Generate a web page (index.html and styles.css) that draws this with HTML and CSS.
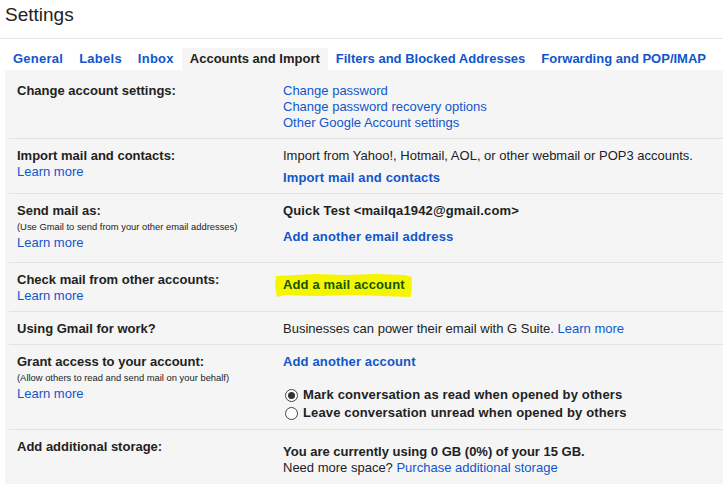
FILE: index.html
```html
<!DOCTYPE html>
<html lang="en">
<head>
<meta charset="utf-8">
<title>Settings</title>
<link rel="stylesheet" href="styles.css">
</head>
<body>
<header class="title">Settings</header>
<nav class="tabs">
  <a class="tab spaced">General</a>
  <a class="tab spaced">Labels</a>
  <a class="tab spaced">Inbox</a>
  <a class="tab active">Accounts and Import</a>
  <a class="tab">Filters and Blocked Addresses</a>
  <a class="tab">Forwarding and POP/IMAP</a>
</nav>
<main class="panel">
  <section class="row">
    <div class="label"><div class="bold">Change account settings:</div></div>
    <div class="value">
      <div><a class="link">Change password</a></div>
      <div><a class="link">Change password recovery options</a></div>
      <div><a class="link">Other Google Account settings</a></div>
    </div>
  </section>
  <section class="row">
    <div class="label">
      <div class="bold">Import mail and contacts:</div>
      <div><a class="link">Learn more</a></div>
    </div>
    <div class="value">
      <div>Import from Yahoo!, Hotmail, AOL, or other webmail or POP3 accounts.</div>
      <div class="gap6"><a class="link bold wide">Import mail and contacts</a></div>
    </div>
  </section>
  <section class="row">
    <div class="label">
      <div class="bold">Send mail as:</div>
      <div class="small">(Use Gmail to send from your other email addresses)</div>
      <div><a class="link">Learn more</a></div>
    </div>
    <div class="value pad-b">
      <div class="bold wide">Quick Test &lt;mailqa1942@gmail.com&gt;</div>
      <div class="gap10"><a class="link bold wide">Add another email address</a></div>
    </div>
  </section>
  <section class="row">
    <div class="label">
      <div class="bold">Check mail from other accounts:</div>
      <div><a class="link">Learn more</a></div>
    </div>
    <div class="value shift5">
      <div><span class="highlight">Add a mail account</span></div>
    </div>
  </section>
  <section class="row">
    <div class="label"><div class="bold">Using Gmail for work?</div></div>
    <div class="value">
      <div>Businesses can power their email with G Suite. <a class="link">Learn more</a></div>
    </div>
  </section>
  <section class="row">
    <div class="label">
      <div class="bold">Grant access to your account:</div>
      <div class="small">(Allow others to read and send mail on your behalf)</div>
      <div><a class="link">Learn more</a></div>
    </div>
    <div class="value">
      <div><a class="link bold wide">Add another account</a></div>
      <div class="radios">
        <div class="radio-row"><span class="radio checked"></span><span class="bold wide">Mark conversation as read when opened by others</span></div>
        <div class="radio-row"><span class="radio"></span><span class="bold wide">Leave conversation unread when opened by others</span></div>
      </div>
    </div>
  </section>
  <section class="row last">
    <div class="label"><div class="bold">Add additional storage:</div></div>
    <div class="value shift5">
      <div class="bold">You are currently using 0 GB (0%) of your 15 GB.</div>
      <div>Need more space? <a class="link">Purchase additional storage</a></div>
    </div>
  </section>
</main>
</body>
</html>
```
FILE: styles.css
```css
html, body {
  margin: 0;
  padding: 0;
  background: #ffffff;
}
body {
  font-family: "Liberation Sans", Arial, sans-serif;
  font-size: 13px;
  color: #222222;
  overflow: hidden;
  height: 484px;
}
.title {
  font-size: 19px;
  line-height: 24px;
  padding: 3px 0 11px 5px;
  height: 24px;
  border-bottom: 1px solid #e5e5e5;
  color: #222222;
}
.tabs {
  display: flex;
  margin-top: 9px;
  padding-left: 5px;
  height: 22px;
}
.tab {
  font-weight: bold;
  line-height: 22px;
  padding: 0 8px;
  color: #1155cc;
  white-space: nowrap;
}
.tab.spaced {
  letter-spacing: 0.25px;
}
.tab.active {
  color: #222222;
  background: #f5f5f5;
}
.panel {
  margin-left: 5px;
  padding: 4px 0 0 4px;
  background: #f5f5f5;
  min-height: 420px;
}
.row {
  display: grid;
  grid-template-columns: 266px 1fr;
  padding: 9px 0 7px 8px;
  border-bottom: 1px solid #e2e2e2;
  line-height: 16px;
}
.row.last {
  border-bottom: none;
}
.bold {
  font-weight: bold;
}
.wide {
  letter-spacing: 0.14px;
}
.link {
  color: #1155cc;
  white-space: nowrap;
}
.small {
  font-size: 9.4px;
  line-height: 16px;
  white-space: nowrap;
}
.value {
  white-space: nowrap;
}
.gap6 { margin-top: 6px; }
.gap10 { margin-top: 10px; }
.pad-b { padding-bottom: 10px; }
.shift5 { margin-top: 5px; }
.highlight {
  display: inline-block;
  font-weight: bold;
  letter-spacing: 0.14px;
  color: #115500;
  background: #f5f500;
  padding: 3px 7px 4px 8px;
  margin: -3px 0 -4px -8px;
  clip-path: polygon(1px 2px, 20px 1px, 40px 0, 70px 1px, 100px 0, 130px 1px, 100% 3px, 100% 18px, 99% 100%, 80px 21px, 40px 22px, 10px 21px, 2px 100%, 0 12px);
}
.radios {
  margin-top: 16px;
}
.radio-row {
  display: flex;
  align-items: center;
  height: 18px;
}
.radio {
  box-sizing: border-box;
  width: 13px;
  height: 13px;
  border: 1px solid #444444;
  border-radius: 50%;
  background: #ffffff;
  margin: 0 5px 0 2px;
  display: flex;
  align-items: center;
  justify-content: center;
}
.radio.checked::after {
  content: "";
  width: 7px;
  height: 7px;
  border-radius: 50%;
  background: #333333;
}
```
